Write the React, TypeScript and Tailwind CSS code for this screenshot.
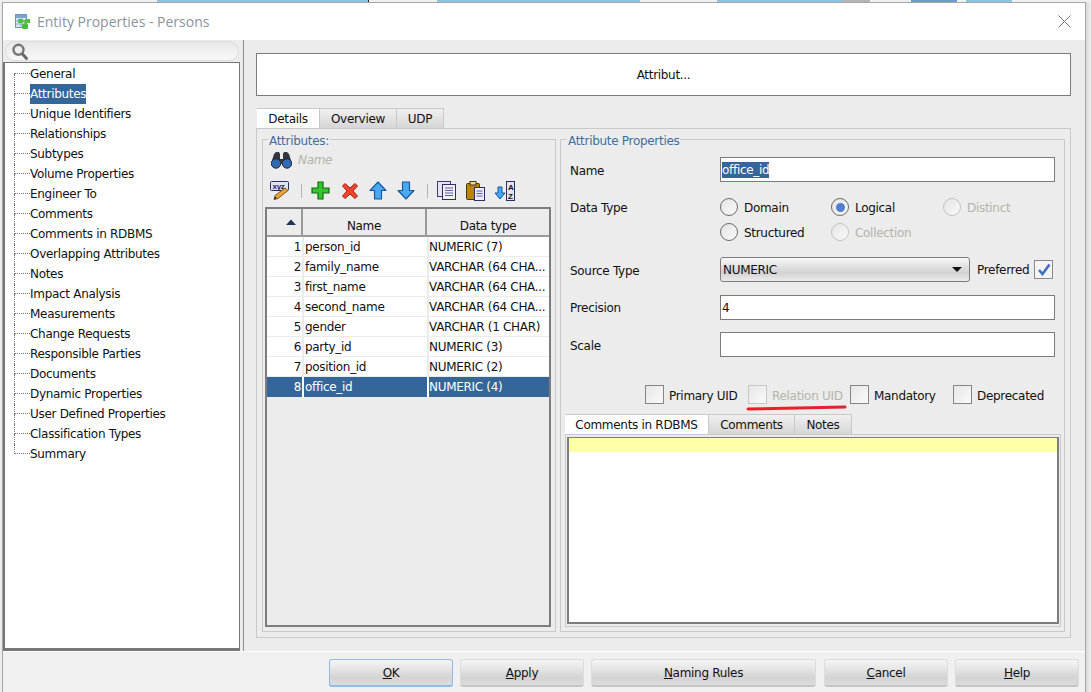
import React from "react";

const treeItems = [
    "General", "Attributes", "Unique Identifiers", "Relationships", "Subtypes", "Volume Properties",
    "Engineer To", "Comments", "Comments in RDBMS", "Overlapping Attributes", "Notes", "Impact Analysis",
    "Measurements", "Change Requests", "Responsible Parties", "Documents", "Dynamic Properties",
    "User Defined Properties", "Classification Types", "Summary",
];

const rows = [
    ["1", "person_id", "NUMERIC (7)"],
    ["2", "family_name", "VARCHAR (64 CHA..."],
    ["3", "first_name", "VARCHAR (64 CHA..."],
    ["4", "second_name", "VARCHAR (64 CHA..."],
    ["5", "gender", "VARCHAR (1 CHAR)"],
    ["6", "party_id", "NUMERIC (3)"],
    ["7", "position_id", "NUMERIC (2)"],
    ["8", "office_id", "NUMERIC (4)"],
];

const Underlined = ({ first, rest }: { first: string; rest: string }) => (
    <span>
        <span className="underline">{first}</span>
        {rest}
    </span>
);

const DialogButton = ({ width, gap, focused, children }: { width: string; gap: string; focused?: boolean; children: React.ReactNode }) => (
    <button
        className={`${width} ${gap} h-[28px] rounded-[3px] border bg-[linear-gradient(#f5f5f5_0%,#e8e8e8_30%,#d3d3d3_70%,#dcdcdc_100%)] text-[12px] text-[#111] ${
            focused ? "border-[#8fbbe8] border-b-2" : "border-[#dcdcdc] border-b-[#c4c4c4] border-b-2"
        }`}
    >
        {children}
    </button>
);

const Radio = ({ label, checked, disabled }: { label: string; checked?: boolean; disabled?: boolean }) => (
    <div className="flex items-center h-[18px]">
        <span
            className={`w-[18px] h-[18px] rounded-full border flex items-center justify-center bg-gradient-to-br from-[#e4e4e4] to-[#fafafa] ${
                disabled ? "border-[#c4c4ba]" : "border-[#6a6a6a]"
            }`}
        >
            {checked && <span className="w-[9px] h-[9px] rounded-full bg-[#4f7fd0]" />}
        </span>
        <span className={`ml-[6px] pt-px ${disabled ? "text-[#b4b4a8]" : "text-[#111]"}`}>{label}</span>
    </div>
);

const Check = ({ label, width, disabled }: { label: string; width: string; disabled?: boolean }) => (
    <div className={`flex items-center ${width}`}>
        <span
            className={`w-[19px] h-[19px] border bg-gradient-to-br from-[#e6e6e6] to-[#fafafa] ${
                disabled ? "border-[#c8c8c0]" : "border-[#858585]"
            }`}
        />
        <span className={`ml-[5px] pt-[2px] ${disabled ? "text-[#b4b4a8]" : "text-[#111]"}`}>{label}</span>
    </div>
);

const Tab = ({ label, width, active }: { label: string; width: string; active?: boolean }) => (
    <div
        className={`${width} h-[20px] flex items-center justify-center border-r border-t border-[#c9c9c9] text-[12px] text-[#111] ${
            active ? "bg-white" : "bg-gradient-to-b from-[#f0f0f0] to-[#d6d6d6]"
        }`}
    >
        {label}
    </div>
);

const TextInput = ({ children }: { children?: React.ReactNode }) => (
    <div className="w-[335px] h-[25px] border border-[#7c7c7c] bg-white flex items-center pl-[1px]">{children}</div>
);

const EntityIcon = () => (
    <svg width="17" height="16" viewBox="0 0 17 16" className="shrink-0">
        <rect x="0.5" y="0.5" width="11" height="13" fill="#dbe6f5" stroke="#6f94c8" />
        <rect x="1" y="1" width="10" height="3" fill="#7ea2d6" />
        <path d="M1 7h10M1 10h10M6 4v9" stroke="#8eaad6" />
        <rect x="3" y="5" width="5" height="4" fill="#4cc53c" />
        <rect x="10" y="5" width="5" height="4" fill="#4cc53c" />
        <rect x="7" y="10" width="6" height="5" rx="1" fill="#45bd38" />
        <path d="M8 7h2M10 8v2" stroke="#3aa12f" />
    </svg>
);

const PenIcon = () => (
    <svg width="20" height="19" viewBox="0 0 20 19">
        <rect x="0.5" y="0.5" width="18" height="9" rx="1" fill="#dfe3f2" stroke="#2c2f5e" />
        <text x="2.5" y="8" fontSize="8" fontWeight="700" fontFamily="Liberation Sans, sans-serif" fill="#1d1d55">xyz</text>
        <path d="M15 7L18 9.5L8 17.5L4 18.5L5 14.5Z" fill="#e8a33a" stroke="#6b3b10" strokeWidth="0.8" />
        <path d="M4 18.5L5 15.5L7 17.5Z" fill="#3a2a1a" />
    </svg>
);

const PlusIcon = () => (
    <svg width="19" height="19" viewBox="0 0 19 19">
        <path d="M7 1h5v6h6v5h-6v6H7v-6H1V7h6z" fill="#35c42d" stroke="#116d12" strokeWidth="1.2" />
    </svg>
);

const CrossIcon = () => (
    <svg width="18" height="18" viewBox="0 0 18 18">
        <path d="M1.5 4L4 1.5L9 6L14 1.5L16.5 4L12 9L16.5 14L14 16.5L9 12L4 16.5L1.5 14L6 9Z" fill="#f0462c" stroke="#9c2313" strokeWidth="1" />
    </svg>
);

const UpIcon = () => (
    <svg width="18" height="19" viewBox="0 0 18 19">
        <path d="M9 1L17 9.5H12.5V18H5.5V9.5H1Z" fill="#4aa8f0" stroke="#12569c" strokeWidth="1.1" strokeLinejoin="round" />
    </svg>
);

const DownIcon = () => (
    <svg width="18" height="19" viewBox="0 0 18 19">
        <path d="M9 18L17 9.5H12.5V1H5.5V9.5H1Z" fill="#4aa8f0" stroke="#12569c" strokeWidth="1.1" strokeLinejoin="round" />
    </svg>
);

const CopyIcon = () => (
    <svg width="20" height="19" viewBox="0 0 20 19">
        <rect x="0.5" y="0.5" width="13" height="15" fill="#e4e4f2" stroke="#3b3b6e" />
        <rect x="5.5" y="3.5" width="13" height="15" fill="#f0f0fa" stroke="#2d2d60" />
        <path d="M8 7h8M8 9.5h8M8 12h8M8 14.5h8" stroke="#5c5cb0" />
    </svg>
);

const PasteIcon = () => (
    <svg width="20" height="20" viewBox="0 0 20 20">
        <rect x="0.5" y="2.5" width="13" height="16" rx="1" fill="#b8860b" stroke="#4a3505" />
        <rect x="4" y="0.5" width="6" height="3.5" fill="#e8d9a0" stroke="#4a3505" />
        <rect x="8.5" y="6.5" width="10" height="13" fill="#eeeef8" stroke="#2d2d60" />
        <path d="M10.5 10h6M10.5 12.5h6M10.5 15h6" stroke="#5c5cb0" />
    </svg>
);

const SortIcon = () => (
    <svg width="21" height="20" viewBox="0 0 21 20">
        <path d="M6 18L11 12H8V6H4V12H1Z" fill="#4aa8f0" stroke="#12569c" strokeWidth="1" />
        <rect x="12.5" y="0.5" width="8" height="19" fill="#e4e4f0" stroke="#2d2d60" />
        <text x="14" y="9" fontSize="8" fontWeight="700" fontFamily="Liberation Sans, sans-serif" fill="#111">A</text>
        <text x="14" y="17.5" fontSize="8" fontWeight="700" fontFamily="Liberation Sans, sans-serif" fill="#111">Z</text>
    </svg>
);

const BinocularsIcon = () => (
    <svg width="21" height="18" viewBox="0 0 21 18">
        <path d="M3 3L5 1H8L9 3V8H12V3L13 1H16L18 3L20.5 11H0.5Z" fill="#33363c" />
        <circle cx="5" cy="12.5" r="4.7" fill="#2f6bb5" stroke="#1c2430" />
        <circle cx="16" cy="12.5" r="4.7" fill="#2f6bb5" stroke="#1c2430" />
        <rect x="9" y="9" width="3" height="4" fill="#33363c" />
    </svg>
);

const SearchIcon = () => (
    <svg width="16" height="17" viewBox="0 0 16 17">
        <circle cx="6.5" cy="6.8" r="5" fill="none" stroke="#777" strokeWidth="2.4" />
        <path d="M10.5 11L14.5 15.5" stroke="#666" strokeWidth="2.8" strokeLinecap="round" />
    </svg>
);

const Toolbar = () => (
    <div className="h-[33px] flex items-center pl-[7px]">
        <PenIcon />
        <span className="ml-[11px] w-px h-[14px] bg-[#b5b5b5]" />
        <span className="ml-[9px]"><PlusIcon /></span>
        <span className="ml-[11px]"><CrossIcon /></span>
        <span className="ml-[10px]"><UpIcon /></span>
        <span className="ml-[10px]"><DownIcon /></span>
        <span className="ml-[12px] w-px h-[14px] bg-[#b5b5b5]" />
        <span className="ml-[9px]"><CopyIcon /></span>
        <span className="ml-[9px]"><PasteIcon /></span>
        <span className="ml-[8px]"><SortIcon /></span>
    </div>
);

const AttributeTable = () => (
    <div className="ml-[2px] w-[286px] h-[420px] border-2 border-[#7d7d7d] bg-[#ececec]">
        <div className="flex h-[28px] bg-[#ececec] border-b-2 border-[#9a9a9a] text-[#111]">
            <div className="w-[36px] flex items-center justify-center border-r-2 border-[#9a9a9a]">
                <svg width="12" height="6" viewBox="0 0 12 6" className="ml-[14px]">
                    <path d="M1 6L6 0.5L11 6Z" fill="#1f3550" />
                </svg>
            </div>
            <div className="w-[124px] flex items-center justify-center border-r-2 border-[#9a9a9a] pt-[8px]">Name</div>
            <div className="flex-1 flex items-center justify-center pt-[8px]">Data type</div>
        </div>
        {rows.map(([num, name, type], i) => (
            <div
                key={num}
                className={`flex h-[20px] items-center ${i === 7 ? "bg-[#34669a] text-white" : "bg-white text-[#111] border-b border-[#ececec]"}`}
            >
                <div className="w-[35px] text-right pr-[1px] h-full leading-[21px]">{num}</div>
                <div className={`w-[125px] pl-[1px] h-full leading-[21px] border-l-2 ${i === 7 ? "border-white" : "border-[#ececec]"}`}>{name}</div>
                <div className={`flex-1 h-full leading-[21px] border-l-2 ${i === 7 ? "border-white" : "border-[#ececec]"}`}>{type}</div>
            </div>
        ))}
    </div>
);

const AttributeForm = () => (
    <div className="text-[#111]">
        <div className="flex items-center mt-[9px] h-[25px]">
            <div className="w-[159px] pl-[9px] pt-[2px]">Name</div>
            <TextInput>
                <span className="bg-[#34669a] text-white leading-[16px]">office_id</span>
            </TextInput>
        </div>
        <div className="flex mt-[16px]">
            <div className="w-[159px] pl-[9px] pt-px leading-[18px]">Data Type</div>
            <div className="grid grid-cols-[111px_112px_120px] gap-y-[7px]">
                <Radio label="Domain" />
                <Radio label="Logical" checked />
                <Radio label="Distinct" disabled />
                <Radio label="Structured" />
                <Radio label="Collection" disabled />
            </div>
        </div>
        <div className="flex items-center mt-[16px] h-[25px]">
            <div className="w-[159px] pl-[9px] pt-[2px]">Source Type</div>
            <div className="w-[250px] h-[25px] rounded-[3px] border border-[#7c7c7c] bg-[linear-gradient(#f8f8f8_0%,#e2e2e2_35%,#d2d2d2_65%,#ececec_100%)] flex items-center justify-between pl-[2px] pr-[7px]">
                <span>NUMERIC</span>
                <svg width="10" height="5" viewBox="0 0 10 5"><path d="M0 0H10L5 5Z" fill="#111" /></svg>
            </div>
            <span className="ml-[7px] pt-px">Preferred</span>
            <span className="ml-[5px] w-[19px] h-[19px] border border-[#8a8a8a] bg-[#f4f4f4] flex items-center justify-center">
                <svg width="14" height="13" viewBox="0 0 14 13"><path d="M2 7L5.5 11L12.5 1.5" fill="none" stroke="#3f6fc4" strokeWidth="2.6" /></svg>
            </span>
        </div>
        <div className="flex items-center mt-[13px] h-[25px]">
            <div className="w-[159px] pl-[9px]">Precision</div>
            <TextInput>4</TextInput>
        </div>
        <div className="flex items-center mt-[12px] h-[25px]">
            <div className="w-[159px] pl-[9px] pt-[2px]">Scale</div>
            <TextInput />
        </div>
        <div className="relative flex items-center mt-[28px] h-[19px] pl-[84px]">
            <Check label="Primary UID" width="w-[103px]" />
            <Check label="Relation UID" width="w-[102px]" disabled />
            <Check label="Mandatory" width="w-[103px]" />
            <Check label="Deprecated" width="w-[110px]" />
            <svg width="102" height="6" viewBox="0 0 102 6" className="absolute left-[185px] top-[20px]">
                <path d="M2 4C30 3.5 60 2.5 99 2" fill="none" stroke="#e8202a" strokeWidth="3" strokeLinecap="round" />
            </svg>
        </div>
        <div className="flex mt-[10px] ml-[4px]">
            <Tab label="Comments in RDBMS" width="w-[144px]" active />
            <Tab label="Comments" width="w-[86px]" />
            <Tab label="Notes" width="w-[57px]" />
        </div>
        <div className="ml-[4px] w-[496px] h-[193px] border border-[#c9c9c9] pt-[2px] pl-[1px]">
            <div className="w-[492px] h-[187px] border-2 border-[#7d7d7d] border-t bg-white">
                <div className="h-[14px] bg-[#ffffa8]" />
            </div>
        </div>
    </div>
);

const App = () => {
    return (
        <div className="w-[1091px] h-[692px] overflow-hidden flex flex-col bg-[#f0f0f0] font-['DejaVu_Sans',sans-serif] text-[12px] tracking-[-0.3px]">
            <div className="h-[2px] flex shrink-0">
                <div className="w-[157px]" />
                <div className="w-[211px] bg-[#8fc4e0]" />
                <div className="w-px bg-[#222]" />
                <div className="w-[68px]" />
                <div className="w-[203px] bg-[#8fc4e0]" />
                <div className="w-[77px]" />
                <div className="w-[126px] bg-[#8fc4e0]" />
                <div className="w-[27px] bg-[#b5b5b5]" />
                <div className="w-[41px]" />
                <div className="w-[46px] bg-[#6f9ad0]" />
                <div className="w-[9px]" />
                <div className="w-[46px] bg-[#8fc4e0]" />
            </div>
            <div className="flex flex-1">
                <div className="w-[2px] bg-[#ececec]" />
                <div className="w-[1084px] border-l border-t border-r border-[#a6a6a6] flex flex-col">
                    <div className="h-[37px] bg-white flex items-center pl-[12px] shrink-0">
                        <EntityIcon />
                        <span className="ml-[5px] text-[14px] tracking-normal text-[#8a94a0] font-['Open_Sans',sans-serif]">Entity Properties - Persons</span>
                        <svg width="13" height="13" viewBox="0 0 13 13" className="ml-auto mr-[14px]">
                            <path d="M0.5 0.5L12.5 12.5M12.5 0.5L0.5 12.5" stroke="#777" />
                        </svg>
                    </div>
                    <div className="h-[611px] flex bg-[#ececec] shrink-0">
                        <div className="w-[238px] flex flex-col">
                            <div className="h-[22px] pt-[1px] pl-[2px]">
                                <div className="w-[234px] h-[20px] rounded-full border border-[#dcdcdc] bg-gradient-to-b from-[#e8e8e8] to-[#f8f8f8] pl-[6px] flex items-center">
                                    <SearchIcon />
                                </div>
                            </div>
                            <div className="w-[237px] h-[589px] bg-white border-t border-r border-[#777] border-l-2 border-b-[3px] pt-[1px] pl-[9px] text-[#111]">
                                {treeItems.map((item, i) => (
                                    <div key={item} className="flex h-[20px]">
                                        <div className="w-[16px] shrink-0 flex flex-col">
                                            <div className={`h-[10px] border-b border-dotted border-[#777] ${i === 0 ? "" : "border-l"}`} />
                                            <div className={`h-[10px] border-dotted border-[#777] ${i === treeItems.length - 1 ? "" : "border-l"}`} />
                                        </div>
                                        <span className={`leading-[20px] ${i === 1 ? "bg-[#34669a] text-white" : ""}`}>{item}</span>
                                    </div>
                                ))}
                            </div>
                        </div>
                        <div className="ml-[2px] w-px bg-[#8c8c8c]" />
                        <div className="flex-1 pl-[12px] pt-[13px]">
                            <div className="w-[815px] h-[43px] bg-white border border-[#7c7c7c] flex items-center justify-center text-[#111]">Attribut...</div>
                            <div className="flex mt-[12px] ml-px">
                                <Tab label="Details" width="w-[63px]" active />
                                <Tab label="Overview" width="w-[77px]" />
                                <Tab label="UDP" width="w-[47px]" />
                            </div>
                            <div className="w-[815px] h-[510px] border border-[#c9c9c9] pt-[1px] pl-[5px] flex">
                                <fieldset className="w-[294px] h-[502px] border border-[#c9c9c9]">
                                    <legend className="ml-[5px] px-[1px] pt-[4px] leading-[14px] text-[#3f6f9f]">Attributes:</legend>
                                    <div className="h-[26px] flex items-center pl-[8px] pb-[2px]">
                                        <BinocularsIcon />
                                        <span className="ml-[6px] italic text-[#b4b4a8]">Name</span>
                                    </div>
                                    <Toolbar />
                                    <AttributeTable />
                                </fieldset>
                                <fieldset className="ml-[4px] w-[505px] h-[502px] border border-[#c9c9c9]">
                                    <legend className="ml-[6px] px-[1px] pt-[4px] leading-[14px] text-[#3f6f9f]">Attribute Properties</legend>
                                    <AttributeForm />
                                </fieldset>
                            </div>
                        </div>
                    </div>
                    <div className="flex-1 border-t border-white pt-[7px] pl-[326px] flex items-start">
                        <DialogButton width="w-[124px]" gap="" focused>
                            <Underlined first="O" rest="K" />
                        </DialogButton>
                        <DialogButton width="w-[124px]" gap="ml-[7px]">
                            <Underlined first="A" rest="pply" />
                        </DialogButton>
                        <DialogButton width="w-[225px]" gap="ml-[7px]">
                            <Underlined first="N" rest="aming Rules" />
                        </DialogButton>
                        <DialogButton width="w-[124px]" gap="ml-[8px]">
                            <Underlined first="C" rest="ancel" />
                        </DialogButton>
                        <DialogButton width="w-[124px]" gap="ml-[7px]">
                            <Underlined first="H" rest="elp" />
                        </DialogButton>
                    </div>
                </div>
                <div className="flex-1 bg-gradient-to-r from-[#d8d8d8] to-[#f0f0f0]" />
            </div>
        </div>
    );
};

export default App;
